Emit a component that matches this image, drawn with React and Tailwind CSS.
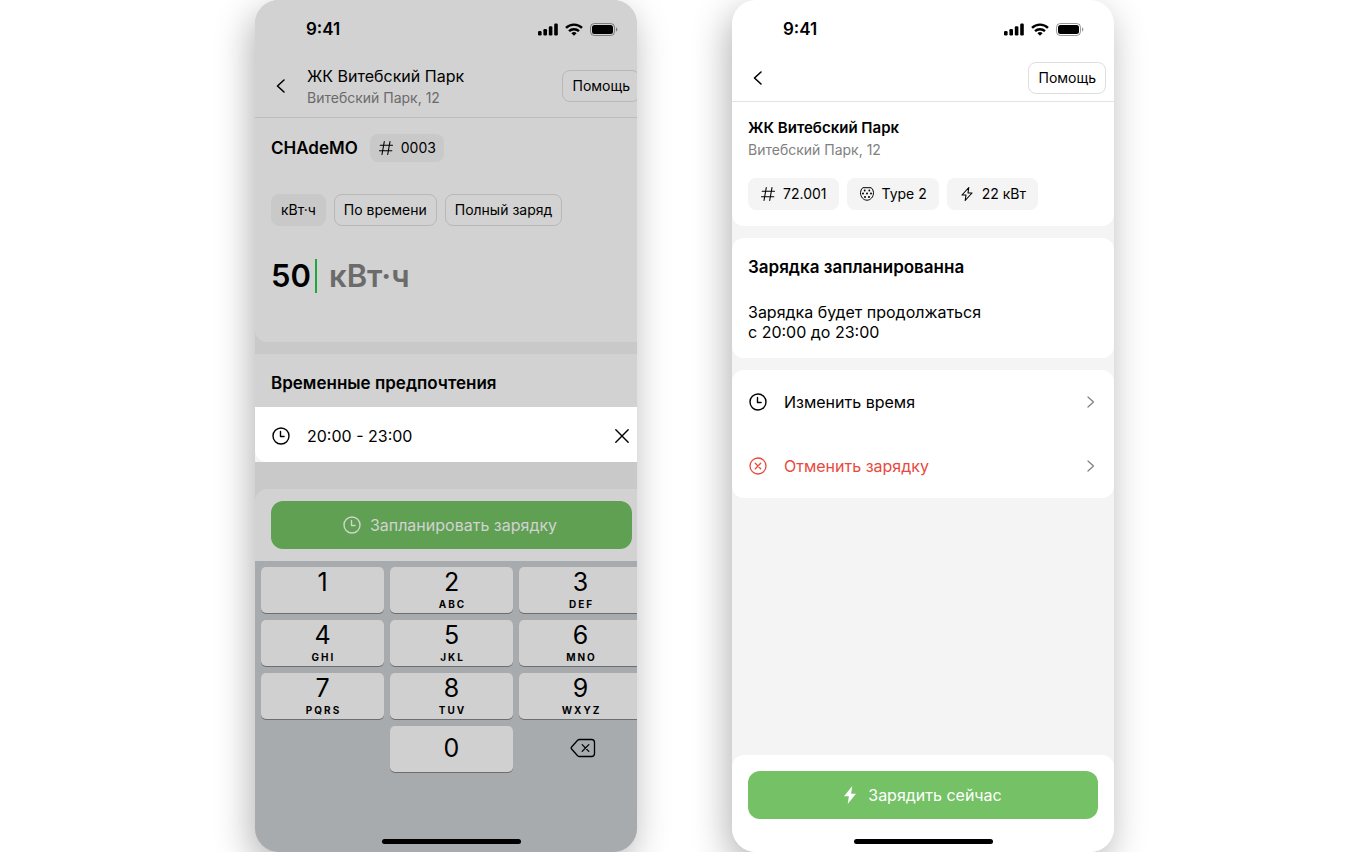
// ============================================================
// Charging flow — planned charge form and planned charge status
// ============================================================

import { useState } from "react";

const KEYS = [
  { digit: "1", letters: "" },
  { digit: "2", letters: "ABC" },
  { digit: "3", letters: "DEF" },
  { digit: "4", letters: "GHI" },
  { digit: "5", letters: "JKL" },
  { digit: "6", letters: "MNO" },
  { digit: "7", letters: "PQRS" },
  { digit: "8", letters: "TUV" },
  { digit: "9", letters: "WXYZ" },
];

const MODES = ["кВт·ч", "По времени", "Полный заряд"];

// ── Icons ───────────────────────────────────────────────────────────────
function SignalIcon() {
  return (
    <svg width="20" height="13" viewBox="0 0 20 13" fill="currentColor" aria-hidden="true">
      <rect x="0" y="8" width="3.6" height="4.5" rx="1.2" />
      <rect x="5.4" y="6" width="3.6" height="6.5" rx="1.2" />
      <rect x="10.8" y="3.3" width="3.6" height="9.2" rx="1.2" />
      <rect x="16.2" y="0.5" width="3.6" height="12" rx="1.2" />
    </svg>
  );
}

function WifiIcon() {
  return (
    <svg width="18" height="13" viewBox="0 0 18 13" fill="none" stroke="currentColor" strokeWidth="2.4" aria-hidden="true">
      <path d="M1 4.9a11.5 11.5 0 0 1 16 0" />
      <path d="M4 8.2a7.3 7.3 0 0 1 10 0" />
      <path d="M9 12.8 6.4 10.2a3.8 3.8 0 0 1 5.2 0Z" fill="currentColor" stroke="none" />
    </svg>
  );
}

function BatteryIcon() {
  return (
    <svg width="28" height="13" viewBox="0 0 28 13" aria-hidden="true">
      <rect x="0.5" y="0.5" width="24" height="12" rx="3.8" fill="none" stroke="currentColor" opacity="0.4" />
      <path d="M26 4.5v4c.8-.3 1.4-1.1 1.4-2s-.6-1.7-1.4-2Z" fill="currentColor" opacity="0.4" />
      <rect x="2" y="2" width="21" height="9" rx="2.5" fill="currentColor" />
    </svg>
  );
}

function BackIcon() {
  return (
    <svg width="20" height="20" viewBox="0 0 20 20" fill="none" stroke="currentColor" strokeWidth="1.6" strokeLinecap="round" strokeLinejoin="round" aria-hidden="true">
      <path d="M13 4 6.5 10l6.5 6" />
    </svg>
  );
}

function ForwardIcon() {
  return (
    <svg width="16" height="16" viewBox="0 0 16 16" fill="none" stroke="#7f7f7f" strokeWidth="1.2" strokeLinecap="round" strokeLinejoin="round" aria-hidden="true">
      <path d="m6 3 5.5 5-5.500 5" />
    </svg>
  );
}

function HashIcon() {
  return (
    <svg width="16" height="16" viewBox="0 0 16 16" fill="none" stroke="currentColor" strokeWidth="1.1" strokeLinecap="round" aria-hidden="true">
      <path d="M6.3 1.5 4 14.5M12 1.5 9.7 14.5M2.2 5.3h12.3M1.5 10.7h12.3" />
    </svg>
  );
}

function ClockIcon() {
  return (
    <svg width="20" height="20" viewBox="0 0 20 20" fill="none" stroke="currentColor" strokeWidth="1.4" strokeLinecap="round" strokeLinejoin="round" aria-hidden="true">
      <circle cx="10" cy="10" r="8" />
      <path d="M9.5 5.5v5h3.6" />
    </svg>
  );
}

function CloseIcon() {
  return (
    <svg width="20" height="20" viewBox="0 0 20 20" fill="none" stroke="currentColor" strokeWidth="1.4" strokeLinecap="round" aria-hidden="true">
      <path d="m3.8 3.8 12.4 12.4M16.2 3.8 3.8 16.2" />
    </svg>
  );
}

function CancelIcon() {
  return (
    <svg width="20" height="20" viewBox="0 0 20 20" fill="none" stroke="currentColor" strokeWidth="1.3" strokeLinecap="round" aria-hidden="true">
      <circle cx="10" cy="10" r="8" />
      <path d="m7.3 7.3 5.4 5.4M12.7 7.3l-5.4 5.4" />
    </svg>
  );
}

function PlugIcon() {
  return (
    <svg width="16" height="16" viewBox="0 0 16 16" fill="none" stroke="currentColor" aria-hidden="true">
      <path d="M3.8 1.7h8.4a6.5 6.5 0 0 1 2.3 5c0 4.2-2.9 7.5-6.5 7.5s-6.5-3.3-6.5-7.5a6.5 6.5 0 0 1 2.3-5Z" />
      <g fill="currentColor" stroke="none">
        <circle cx="5.7" cy="4.5" r="0.9" />
        <circle cx="10.3" cy="4.5" r="0.9" />
        <circle cx="4" cy="7.6" r="1" />
        <circle cx="8" cy="7.6" r="1" />
        <circle cx="12" cy="7.6" r="1" />
        <circle cx="6" cy="10.9" r="1" />
        <circle cx="10" cy="10.9" r="1" />
      </g>
    </svg>
  );
}

function BoltIcon() {
  return (
    <svg width="16" height="16" viewBox="0 0 16 16" fill="none" stroke="currentColor" strokeWidth="1.1" strokeLinejoin="round" aria-hidden="true">
      <path d="M9.8 1.5 3 9h4l-.8 5.5L13 7H9Z" />
    </svg>
  );
}

function BoltFilledIcon() {
  return (
    <svg width="20" height="20" viewBox="0 0 20 20" fill="currentColor" aria-hidden="true">
      <path d="M12.3 1 4 11.2h4.9L7.700 19 16 8.8h-4.900Z" />
    </svg>
  );
}

function BackspaceIcon() {
  return (
    <svg width="26" height="20" viewBox="0 0 26 20" fill="none" stroke="currentColor" strokeWidth="1.3" strokeLinecap="round" strokeLinejoin="round" aria-hidden="true">
      <path d="M9.6 1.5h11.9a3 3 0 0 1 3 3v11a3 3 0 0 1-3 3H9.6a3 3 0 0 1-2-.8l-6-6.7a1.5 1.5 0 0 1 0-2l6-6.7a3 3 0 0 1 2-.8Z" />
      <path d="m12.2 6.6 6.6 6.8M18.8 6.6l-6.6 6.8" />
    </svg>
  );
}

// ── Shared parts ────────────────────────────────────────────────────────
function StatusBar() {
  return (
    <div className="flex h-[54px] shrink-0 items-center justify-between pt-1 pr-[30px] pl-[51px]">
      <span className="text-[17px] leading-6 font-semibold">9:41</span>
      <div className="flex items-center gap-[7px]">
        <SignalIcon />
        <WifiIcon />
        <BatteryIcon />
      </div>
    </div>
  );
}

function HomeIndicator() {
  return <div className="mx-auto h-[5px] w-[139px] rounded-full bg-black" />;
}

function Phone({ className, children }) {
  return (
    <section
      className={`flex min-h-screen max-w-[382px] min-w-0 flex-1 flex-col overflow-hidden rounded-3xl shadow-[-4px_12px_36px_rgba(0,0,0,0.3)] ${className}`}
    >
      {children}
    </section>
  );
}

// ── Planning a charge (dimmed behind the time row) ──────────────────────
function PlanScreen() {
  const [mode, setMode] = useState(MODES[0]);
  const [amount, setAmount] = useState("50");

  return (
    <Phone className="bg-[#c9c9c9]">
      <div className="flex min-w-[393px] flex-1 flex-col">
        <div className="rounded-b-xl bg-[#d2d2d2]">
          <StatusBar />
          <header className="flex h-16 items-center border-b border-[#bdbdbd] pr-2 pl-4">
            <button aria-label="Назад">
              <BackIcon />
            </button>
            <div className="ml-4 flex-1">
              <h1 className="text-base leading-6">ЖК Витебский Парк</h1>
              <p className="text-sm leading-5 text-[#6b6b6b]">Витебский Парк, 12</p>
            </div>
            <button className="h-8 rounded-lg border border-[#b8b8b8] px-[9px] text-sm">Помощь</button>
          </header>

          <div className="px-4 pt-4 pb-12">
            <div className="flex items-center gap-3">
              <h2 className="text-[17px] leading-7 font-semibold">CHAdeMO</h2>
              <span className="flex h-7 items-center gap-[7px] rounded-lg bg-[#c9c9c9] px-2 text-sm">
                <HashIcon />
                0003
              </span>
            </div>

            <div className="mt-8 flex gap-2">
              {MODES.map((item) => (
                <button
                  key={item}
                  onClick={() => setMode(item)}
                  className={`h-8 rounded-lg border px-[9px] text-sm ${
                    mode === item ? "border-[#c9c9c9] bg-[#c9c9c9]" : "border-[#b8b8b8]"
                  }`}
                >
                  {item}
                </button>
              ))}
            </div>

            <div className="mt-8 flex items-center text-[31px] leading-9 font-semibold">
              <input
                aria-label="Количество, кВт·ч"
                value={amount}
                onChange={(e) => setAmount(e.target.value)}
                className="w-11 bg-transparent outline-none"
              />
              <span className="h-[34px] w-0.5 bg-[#1da83c]" />
              <span className="ml-3 text-[#6b6b6b]">кВт·ч</span>
            </div>
          </div>
        </div>

        <div className="mt-3 bg-[#d2d2d2]">
          <h2 className="px-4 pt-[15px] pb-2.5 text-[17px] leading-7 font-semibold">Временные предпочтения</h2>
          <div className="bg-[#f4f4f4]">
            <div className="flex h-[55px] items-center rounded-bl-xl bg-white px-4 pt-[3px]">
              <ClockIcon />
              <span className="ml-4 flex-1 text-base">20:00 - 23:00</span>
              <button aria-label="Очистить время">
                <CloseIcon />
              </button>
            </div>
          </div>
        </div>

        <div className="mt-[27px] rounded-t-xl bg-[#d2d2d2] px-4 py-3">
          <button className="flex h-12 w-full items-center justify-center gap-2 rounded-xl bg-[#5fa052] pr-1 text-base text-[#d2d2d2]">
            <ClockIcon />
            Запланировать зарядку
          </button>
        </div>

        {/* Numeric keyboard */}
        <div className="flex flex-1 flex-col justify-between bg-[#a7abae] pb-2">
          <div className="grid grid-cols-3 gap-x-1.5 gap-y-[7px] p-1.5">
            {KEYS.map(({ digit, letters }) => (
              <button
                key={digit}
                onClick={() => setAmount((prev) => prev + digit)}
                className="flex h-[46px] flex-col items-center rounded-[5px] bg-[#d0d0d0] shadow-[0_1px_0_#6c6e70]"
              >
                <span className="text-[25px] leading-[31px]">{digit}</span>
                <span className="pl-0.5 text-[10px] leading-3 font-bold tracking-[2px]">{letters}</span>
              </button>
            ))}
            <button
              onClick={() => setAmount((prev) => prev + "0")}
              className="col-start-2 h-[46px] rounded-[5px] bg-[#d0d0d0] text-[25px] shadow-[0_1px_0_#6c6e70]"
            >
              0
            </button>
            <button
              aria-label="Удалить"
              onClick={() => setAmount((prev) => prev.slice(0, -1))}
              className="flex h-[46px] items-center justify-center pb-0.5 pl-1"
            >
              <BackspaceIcon />
            </button>
          </div>
          <HomeIndicator />
        </div>
      </div>
    </Phone>
  );
}

// ── Charge already planned ──────────────────────────────────────────────
function Chip({ icon, children }) {
  return (
    <li className="flex h-8 items-center gap-[7px] rounded-lg bg-[#f4f4f4] px-3 text-sm">
      {icon}
      {children}
    </li>
  );
}

function ActionRow({ icon, label, className }) {
  return (
    <button className="flex h-16 w-full items-center px-4 text-left">
      <span className={`flex flex-1 items-center gap-4 text-base ${className}`}>
        {icon}
        {label}
      </span>
      <ForwardIcon />
    </button>
  );
}

function PlannedScreen() {
  return (
    <Phone className="bg-[#f4f4f4]">
      <div className="rounded-b-xl bg-white">
        <StatusBar />
        <header className="flex h-12 items-center justify-between border-b border-[#e3e3e3] pr-2 pl-4">
          <button aria-label="Назад">
            <BackIcon />
          </button>
          <button className="h-8 rounded-lg border border-[#dedede] px-[9px] text-sm">Помощь</button>
        </header>
        <div className="px-4 pt-3.5 pb-4">
          <h1 className="text-[15px] leading-6 font-semibold">ЖК Витебский Парк</h1>
          <p className="text-sm leading-5 text-[#7f7f7f]">Витебский Парк, 12</p>
          <ul className="mt-[18px] flex gap-2">
            <Chip icon={<HashIcon />}>72.001</Chip>
            <Chip icon={<PlugIcon />}>Type 2</Chip>
            <Chip icon={<BoltIcon />}>22 кВт</Chip>
          </ul>
        </div>
      </div>

      <div className="mt-3 rounded-xl bg-white px-4 pt-[15px] pb-4">
        <h2 className="text-[17px] leading-7 font-semibold">Зарядка запланированна</h2>
        <p className="mt-[21px] text-base leading-5">
          Зарядка будет продолжаться
          <br />с 20:00 до 23:00
        </p>
      </div>

      <div className="mt-3 rounded-xl bg-white">
        <ActionRow icon={<ClockIcon />} label="Изменить время" className="text-black" />
        <ActionRow icon={<CancelIcon />} label="Отменить зарядку" className="text-[#e8493c]" />
      </div>

      <div className="mt-auto rounded-t-xl bg-white pt-4 pb-2">
        <div className="px-4 pb-5">
          <button className="flex h-12 w-full items-center justify-center gap-2 rounded-xl bg-[#74c265] pr-1 text-base text-white">
            <BoltFilledIcon />
            Зарядить сейчас
          </button>
        </div>
        <HomeIndicator />
      </div>
    </Phone>
  );
}

export default function App() {
  return (
    <main className="flex min-h-screen justify-center gap-[95px] overflow-hidden bg-white font-['Inter',sans-serif] text-black">
      <PlanScreen />
      <PlannedScreen />
    </main>
  );
}
